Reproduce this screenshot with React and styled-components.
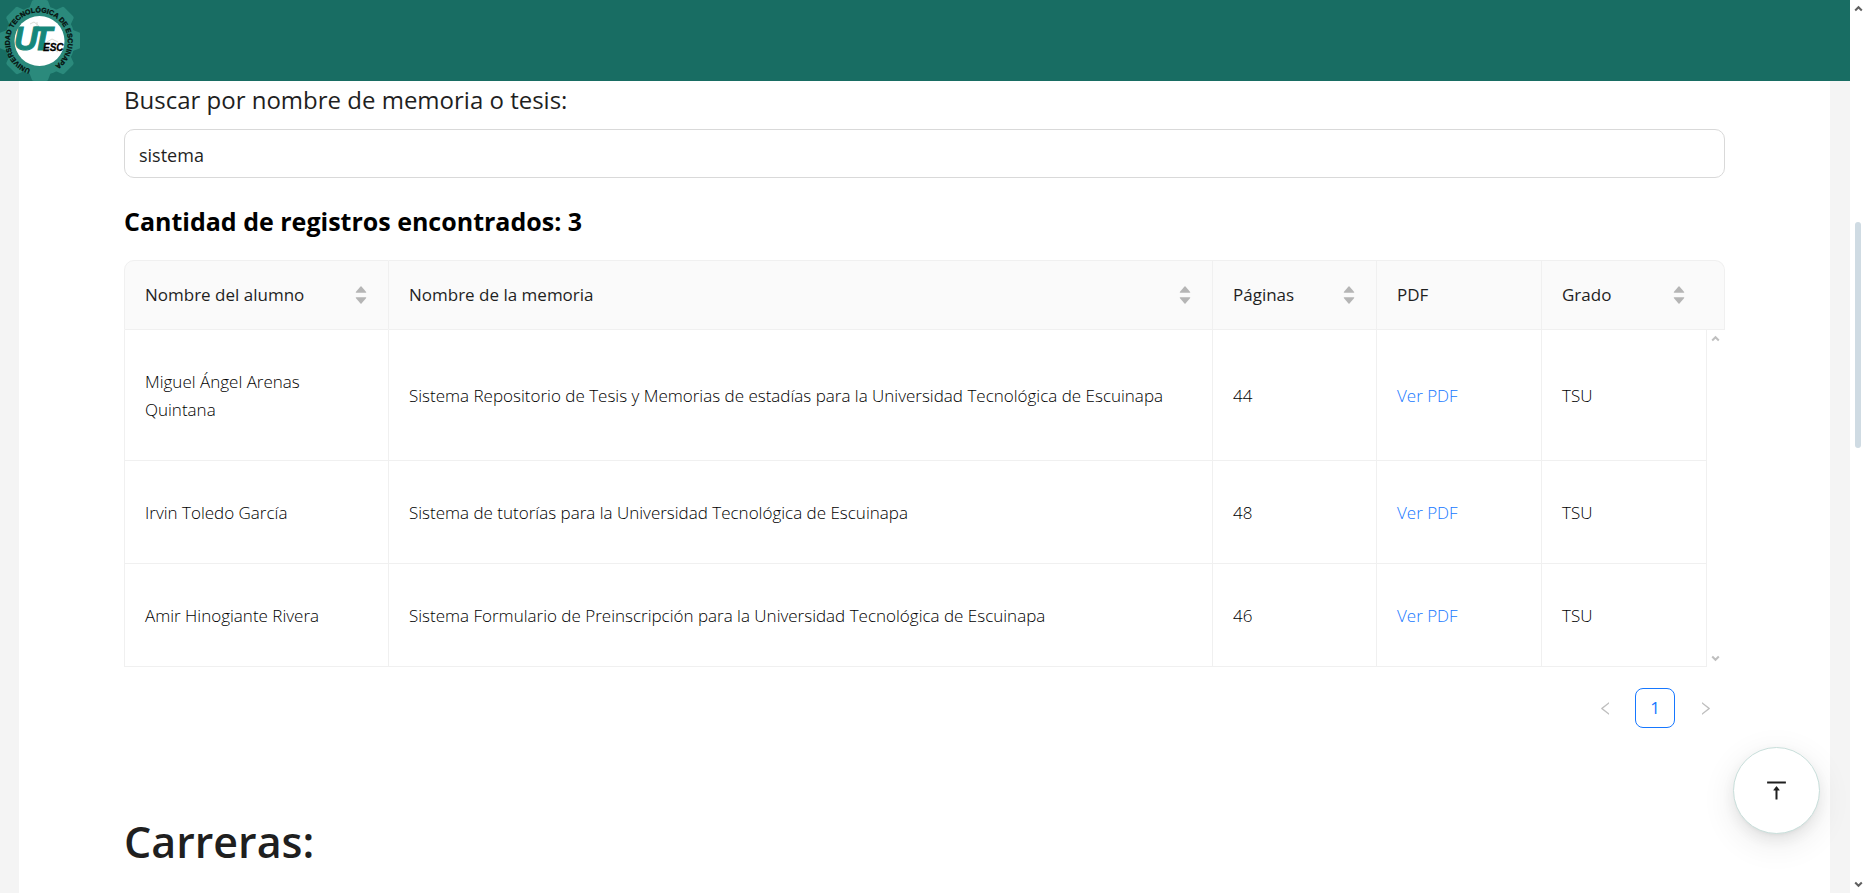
import React, { useState } from "react";
import styled, { createGlobalStyle } from "styled-components";
import { AiOutlineVerticalAlignTop, AiOutlineLeft, AiOutlineRight } from "react-icons/ai";

const GlobalStyle = createGlobalStyle`
  *, *::before, *::after { box-sizing: border-box; }
  body {
    margin: 0;
    background: #f4f4f4;
    color: #1f1f1f;
    font-family: "Open Sans", "Noto Sans", sans-serif;
    font-size: 17px;
    line-height: 28px;
  }
`;

const Shell = styled.div`
  display: grid;
  grid-template-columns: minmax(0, 1fr) 17px;
  height: 100vh;
  overflow: hidden;
`;

const Page = styled.div`
  display: flex;
  flex-direction: column;
  min-width: 0;
  overflow: hidden;
`;

const Header = styled.header`
  flex: none;
  height: 81px;
  background: #186d63;
`;

const LogoLink = styled.a`
  display: block;
  width: 80px;
  height: 81px;
`;

const Main = styled.main`
  flex: 1;
  margin: 0 20px 0 19px;
  padding: 0 105px;
  background: #fff;
`;

const SearchLabel = styled.label`
  display: block;
  margin-bottom: 10px;
  font-size: 24px;
  line-height: 38px;
  font-weight: 500;
`;

const SearchInput = styled.input`
  display: block;
  width: 100%;
  height: 49px;
  padding: 2px 14px 0;
  border: 1px solid #d9d9d9;
  border-radius: 10px;
  background: #fff;
  color: #1f1f1f;
  font: inherit;
  font-size: 18px;
  outline: none;
`;

const Count = styled.h2`
  margin: 27px 0 23px;
  color: #000;
  font-size: 25px;
  line-height: 32px;
  font-weight: 700;
`;

const Table = styled.table`
  width: 100%;
  table-layout: fixed;
  border-collapse: separate;
  border-spacing: 0;
`;

const Col = styled.col`
  width: ${(p) => p.$width || "auto"};
`;

const HeadCell = styled.th`
  height: 70px;
  padding: 0 ${(p) => (p.$last ? "39px" : "21px")} 0 20px;
  border: solid #f0f0f0;
  border-width: 1px 1px 1px 0;
  background: #fafafa;
  text-align: left;
  font-weight: 500;
  &:first-child { border-left-width: 1px; border-top-left-radius: 10px; }
  &:last-child { border-top-right-radius: 10px; }
`;

const HeadContent = styled.div`
  display: flex;
  align-items: center;
  justify-content: space-between;
`;

const SortButton = styled.button`
  display: flex;
  padding: 0;
  border: 0;
  background: none;
  color: #b5b5b5;
  cursor: pointer;
`;

const Cell = styled.td`
  padding: 38px 20px 36px;
  border: solid #f0f0f0;
  border-width: 0 1px 1px 0;
  font-weight: 350;
  color: #000;
  &:first-child { border-left-width: 1px; }
`;

const Gutter = styled.td`
  padding: 5px 4px;
  vertical-align: ${(p) => p.$align};
  color: #bfbfbf;
  line-height: 0;
`;

const PdfLink = styled.a`
  color: #1677ff;
  text-decoration: none;
`;

const Pagination = styled.nav`
  display: flex;
  justify-content: flex-end;
  gap: 10px;
  margin-top: 21px;
`;

const PageButton = styled.button`
  display: flex;
  align-items: center;
  justify-content: center;
  width: 40px;
  height: 40px;
  padding: 0;
  border: 1px solid ${(p) => (p.$active ? "#1677ff" : "transparent")};
  border-radius: 8px;
  background: #fff;
  color: ${(p) => (p.$active ? "#1677ff" : "#bfbfbf")};
  font: inherit;
  font-weight: 500;
`;

const Title = styled.h1`
  margin: 80px 0 0;
  font-size: 43px;
  line-height: 68px;
  font-weight: 600;
`;

const TopButton = styled.button`
  position: fixed;
  right: 47px;
  bottom: 59px;
  display: flex;
  align-items: center;
  justify-content: center;
  width: 87px;
  height: 87px;
  padding: 0;
  border: 1px solid #c8deda;
  border-radius: 50%;
  background: #fff;
  color: #1f1f1f;
  box-shadow: 0 6px 16px 0 rgba(0, 0, 0, 0.08), 0 3px 6px -4px rgba(0, 0, 0, 0.12),
    0 9px 28px 8px rgba(0, 0, 0, 0.05);
`;

const ScrollBar = styled.div`
  display: grid;
  grid-template-rows: 17px 1fr 17px;
  justify-items: center;
  align-items: center;
  background: #fff;
  color: #606060;
`;

const ScrollTrack = styled.div`
  display: grid;
  grid-template-rows: 205fr 226fr 428fr;
  height: 100%;
  padding-right: 1px;
`;

const ScrollThumb = styled.div`
  grid-row: 2;
  width: 6px;
  border-radius: 3px;
  background: #cfdbe3;
`;

function Arrow({ down }) {
  return (
    <svg width="9" height="7" viewBox="0 0 9 7" aria-hidden="true">
      <path
        d={down ? "M1.2 1.5 4.5 4.8 7.8 1.5" : "M1.2 5.5 4.5 2.2 7.8 5.5"}
        fill="none"
        stroke="currentColor"
        strokeWidth="2"
      />
    </svg>
  );
}

function SortIcon() {
  return (
    <svg width="12" height="20" viewBox="0 0 12 20" fill="currentColor" aria-hidden="true">
      <path d="M5.5 1.4Q6 .9 6.5 1.4L11.2 7Q11.5 7.8 10.8 7.8H1.2Q.5 7.8.8 7Z" />
      <path d="M5.5 18.6Q6 19.1 6.5 18.6L11.2 13Q11.5 12.2 10.8 12.2H1.2Q.5 12.2.8 13Z" />
    </svg>
  );
}

const TEETH = [0, 45, 90, 135, 180, 225, 270, 315];

function Logo() {
  return (
    <svg width="80" height="81" viewBox="0 0 80 81" role="img" aria-label="UTESC">
      <g fill="#2b8a7c">
        <circle cx="40" cy="40.500" r="35" />
        {TEETH.map((a) => (
          <path key={a} d="M29 9 32 1Q32.500 0 34 0H46Q47.500 0 48 1L51 9Z" transform={`rotate(${a} 40 40.500)`} />
        ))}
      </g>
      <circle cx="39.500" cy="41" r="25" fill="#fff" />
      <g fill="none" stroke="#dcdcd6" strokeWidth="1">
        <path d="M30 24l4-2 4 3 3 5M47 42l5-3 6 3M53 49l5 3M37 22v7" />
      </g>
      <path id="logo-ring" d="M30.500 69.200A29 29 0 1 1 50 68.200" fill="none" />
      <text fontFamily="Liberation Sans, sans-serif" fontWeight="700" fontSize="7" fill="#06120f" stroke="#06120f" strokeWidth=".3">
        <textPath href="#logo-ring">UNIVERSIDAD TECNOLÓGICA DE ESCUINAPA</textPath>
      </text>
      <g fontFamily="Liberation Sans, sans-serif" fontWeight="700" fontStyle="italic">
        <text y="50" fontSize="33" fill="#16877a" stroke="#16877a" strokeWidth="1">
          <tspan x="14">U</tspan>
          <tspan x="32">T</tspan>
        </text>
        <text x="43" y="51" fontSize="10" fill="#000" stroke="#000" strokeWidth=".3">ESC</text>
      </g>
    </svg>
  );
}

const COLUMNS = [
  { title: "Nombre del alumno", sortable: true },
  { title: "Nombre de la memoria", sortable: true },
  { title: "Páginas", sortable: true },
  { title: "PDF", sortable: false },
  { title: "Grado", sortable: true },
];

const ROWS = [
  ["Miguel Ángel Arenas Quintana", "Sistema Repositorio de Tesis y Memorias de estadías para la Universidad Tecnológica de Escuinapa", 44, "TSU"],
  ["Irvin Toledo García", "Sistema de tutorías para la Universidad Tecnológica de Escuinapa", 48, "TSU"],
  ["Amir Hinogiante Rivera", "Sistema Formulario de Preinscripción para la Universidad Tecnológica de Escuinapa", 46, "TSU"],
];

function ThesisTable() {
  const lastColumn = COLUMNS.length - 1;
  return (
    <Table>
      <colgroup>
        <Col $width="265px" />
        <Col />
        <Col $width="164px" />
        <Col $width="165px" />
        <Col $width="165px" />
        <Col $width="18px" />
      </colgroup>
      <thead>
        <tr>
          {COLUMNS.map((c, i) => (
            <HeadCell key={c.title} scope="col" colSpan={i === lastColumn ? 2 : 1} $last={i === lastColumn}>
              <HeadContent>
                {c.title}
                {c.sortable && (
                  <SortButton type="button" aria-label={`Ordenar por ${c.title}`}>
                    <SortIcon />
                  </SortButton>
                )}
              </HeadContent>
            </HeadCell>
          ))}
        </tr>
      </thead>
      <tbody>
        {ROWS.map(([student, title, pages, degree], i) => (
          <tr key={student}>
            <Cell>{student}</Cell>
            <Cell>{title}</Cell>
            <Cell>{pages}</Cell>
            <Cell>
              <PdfLink href="#pdf">Ver PDF</PdfLink>
            </Cell>
            <Cell>{degree}</Cell>
            <Gutter $align={i === 0 ? "top" : "bottom"}>
              {i === 0 && <Arrow />}
              {i === ROWS.length - 1 && <Arrow down />}
            </Gutter>
          </tr>
        ))}
      </tbody>
    </Table>
  );
}

export default function App() {
  const [query, setQuery] = useState("sistema");
  return (
    <>
      <GlobalStyle />
      <Shell>
        <Page>
          <Header>
            <LogoLink href="#inicio">
              <Logo />
            </LogoLink>
          </Header>
          <Main>
            <SearchLabel htmlFor="search">Buscar por nombre de memoria o tesis:</SearchLabel>
            <SearchInput id="search" type="text" value={query} onChange={(e) => setQuery(e.target.value)} />
            <Count>Cantidad de registros encontrados: 3</Count>
            <ThesisTable />
            <Pagination aria-label="Paginación">
              <PageButton type="button" disabled aria-label="Anterior">
                <AiOutlineLeft size={17} />
              </PageButton>
              <PageButton type="button" $active aria-current="page">1</PageButton>
              <PageButton type="button" disabled aria-label="Siguiente">
                <AiOutlineRight size={17} />
              </PageButton>
            </Pagination>
            <Title>Carreras:</Title>
          </Main>
        </Page>
        <ScrollBar aria-hidden="true">
          <Arrow />
          <ScrollTrack>
            <ScrollThumb />
          </ScrollTrack>
          <Arrow down />
        </ScrollBar>
      </Shell>
      <TopButton type="button" aria-label="Volver arriba">
        <AiOutlineVerticalAlignTop size={27} />
      </TopButton>
    </>
  );
}
